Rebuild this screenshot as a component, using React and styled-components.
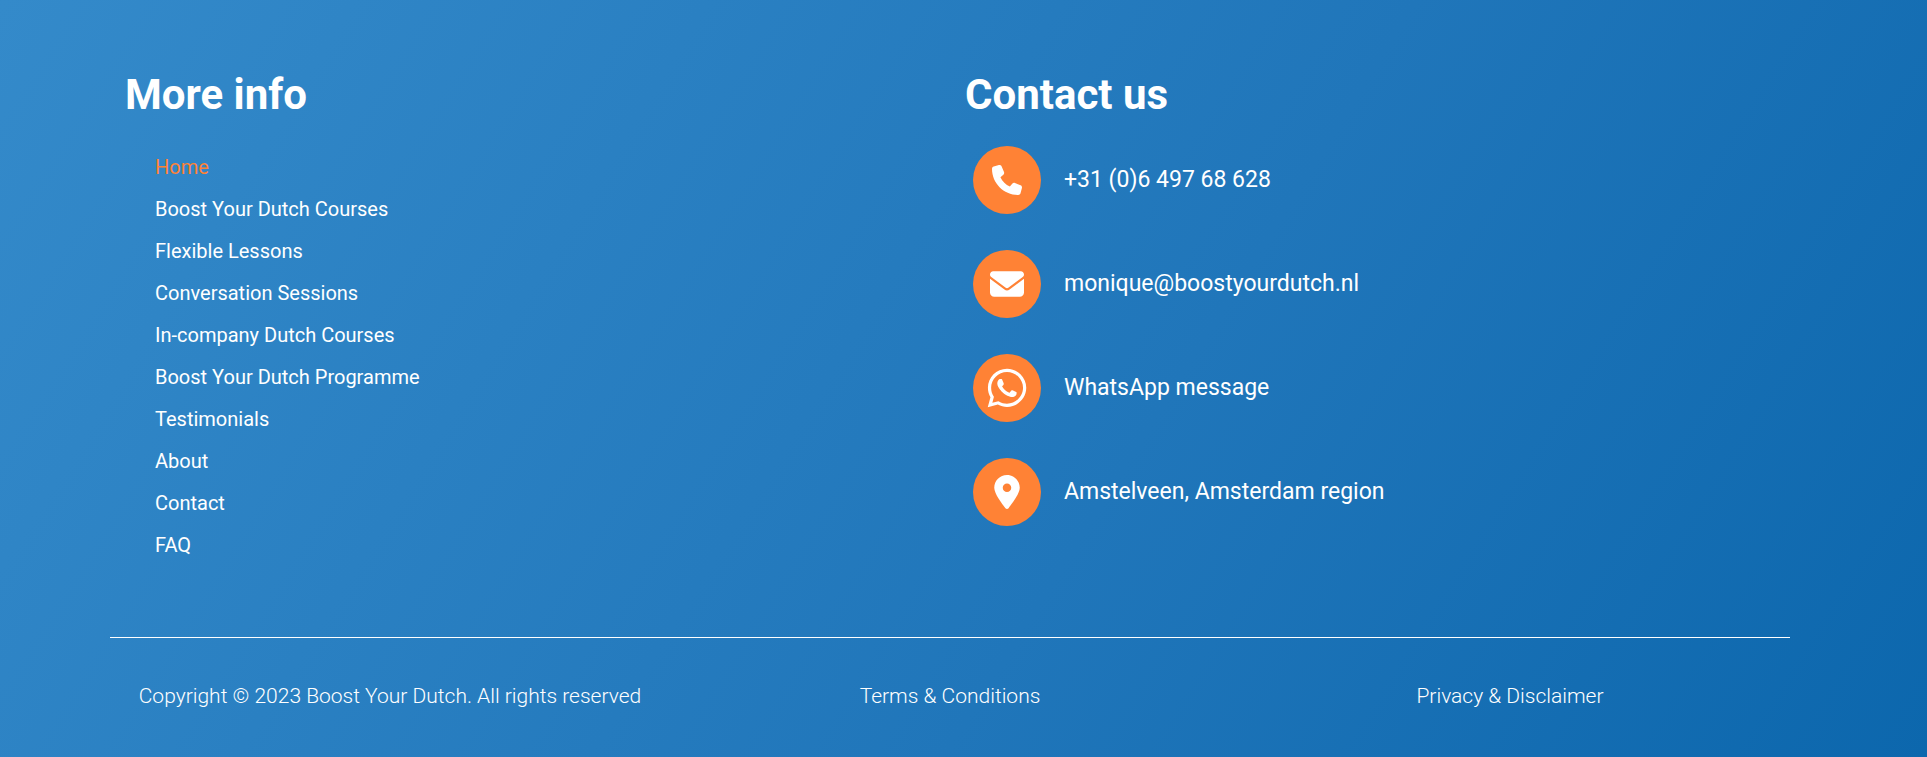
import React from "react";
import styled, { createGlobalStyle } from "styled-components";
import { FaPhone, FaEnvelope, FaWhatsapp, FaLocationDot } from "react-icons/fa6";

const GlobalStyle = createGlobalStyle`
  *, *::before, *::after { box-sizing: border-box; }
  body {
    margin: 0;
    font-family: Roboto, "Liberation Sans", sans-serif;
    color: #fff;
  }
`;

const Footer = styled.footer`
  min-height: 100vh;
  padding: 70px 27px 40px 0;
  background: linear-gradient(122deg, #348aca 0%, #2076ba 59%, #0c67ad 100%);
`;

const Container = styled.div`
  max-width: 1680px;
  margin: 0 auto;
`;

const Columns = styled.div`
  display: grid;
  grid-template-columns: repeat(auto-fit, minmax(min(100%, 420px), 1fr));
`;

const Column = styled.section`
  padding: 0 15px;
`;

const Title = styled.h2`
  margin: 0 0 26px;
  font-size: 42px;
  line-height: 50px;
  font-weight: 700;
`;

const MenuList = styled.ul`
  margin: 0;
  padding: 0 0 0 30px;
  list-style: none;
`;

const MenuLink = styled.a`
  font-size: 20px;
  line-height: 42px;
  color: ${({ $active }) => ($active ? "#ff8235" : "#fff")};
  text-decoration: none;
`;

const ContactList = styled.ul`
  display: flex;
  flex-direction: column;
  gap: 36px;
  margin: 0;
  padding: 0 0 0 8px;
  list-style: none;
`;

const ContactLink = styled.a`
  display: flex;
  align-items: center;
  gap: 23px;
  font-size: 23px;
  line-height: 32px;
  color: #fff;
  text-decoration: none;
`;

const IconCircle = styled.span`
  display: flex;
  flex: none;
  align-items: center;
  justify-content: center;
  width: 68px;
  height: 68px;
  border-radius: 50%;
  background: #ff8235;
`;

const Bottom = styled.div`
  display: grid;
  grid-template-columns: repeat(auto-fit, minmax(min(100%, 520px), 1fr));
  margin-top: 71px;
  padding-top: 42px;
  border-top: 1px solid #fff;
  font-size: 21px;
  line-height: 32px;
  font-weight: 300;
  text-align: center;
`;

const Copyright = styled.p`
  margin: 0;
`;

const LegalLink = styled.a`
  color: #fff;
  text-decoration: none;
`;

const pages = [
  "Home",
  "Boost Your Dutch Courses",
  "Flexible Lessons",
  "Conversation Sessions",
  "In-company Dutch Courses",
  "Boost Your Dutch Programme",
  "Testimonials",
  "About",
  "Contact",
  "FAQ",
];

const contacts = [
  { Icon: FaPhone, size: 30, text: "+31 (0)6 497 68 628", href: "tel:+31649768628" },
  { Icon: FaEnvelope, size: 34, text: "monique@boostyourdutch.nl", href: "mailto:monique@boostyourdutch.nl" },
  { Icon: FaWhatsapp, size: 44, text: "WhatsApp message", href: "#whatsapp" },
  { Icon: FaLocationDot, size: 34, text: "Amstelveen, Amsterdam region", href: "#location" },
];

export default function App() {
  return (
    <>
      <GlobalStyle />
      <Footer>
        <Container>
          <Columns>
            <Column>
              <Title>More info</Title>
              <nav>
                <MenuList>
                  {pages.map((page, i) => (
                    <li key={page}>
                      <MenuLink href="#" $active={i === 0} aria-current={i === 0 ? "page" : undefined}>
                        {page}
                      </MenuLink>
                    </li>
                  ))}
                </MenuList>
              </nav>
            </Column>
            <Column>
              <Title>Contact us</Title>
              <ContactList>
                {contacts.map(({ Icon, size, text, href }) => (
                  <li key={text}>
                    <ContactLink href={href}>
                      <IconCircle>
                        <Icon size={size} aria-hidden="true" />
                      </IconCircle>
                      {text}
                    </ContactLink>
                  </li>
                ))}
              </ContactList>
            </Column>
          </Columns>
          <Bottom>
            <Copyright>Copyright © 2023 Boost Your Dutch. All rights reserved</Copyright>
            <div>
              <LegalLink href="#">Terms &amp; Conditions</LegalLink>
            </div>
            <div>
              <LegalLink href="#">Privacy &amp; Disclaimer</LegalLink>
            </div>
          </Bottom>
        </Container>
      </Footer>
    </>
  );
}
